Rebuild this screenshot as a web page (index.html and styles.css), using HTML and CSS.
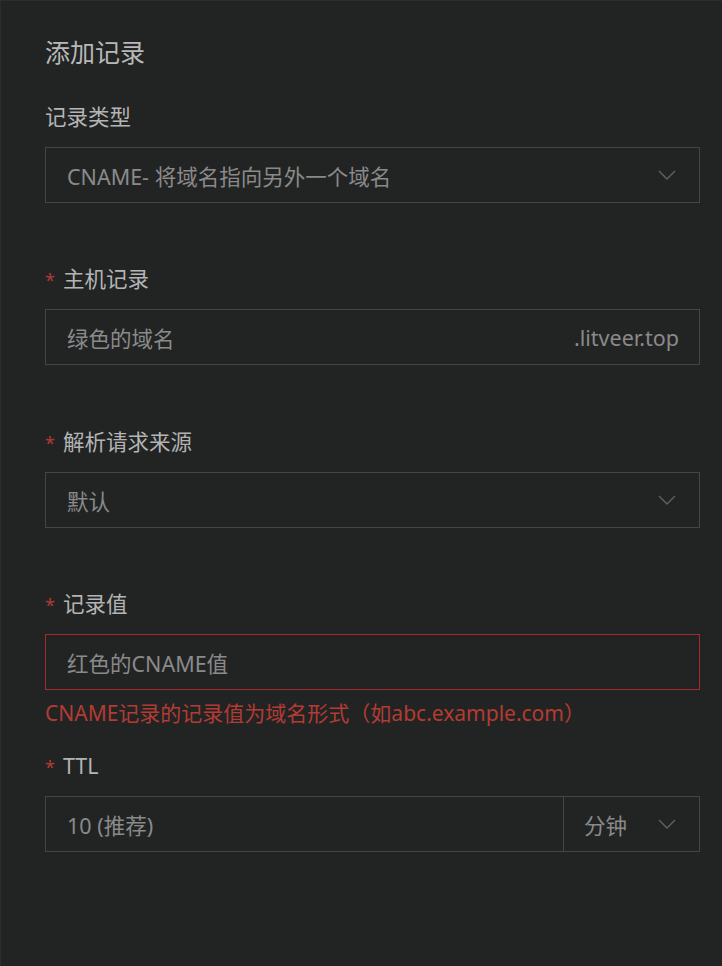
FILE: index.html
```html
<!DOCTYPE html>
<html lang="zh-CN">
<head>
<meta charset="utf-8">
<link rel="stylesheet" href="styles.css">
</head>
<body>
<div class="panel">
  <h1 class="title">添加记录</h1>

  <div class="field">
    <div class="label">记录类型</div>
    <div class="box select">
      <span class="value">CNAME- 将域名指向另外一个域名</span>
      <svg class="chev" width="18" height="10" viewBox="0 0 18 10"><path d="M1 1 L9 9 L17 1" fill="none" stroke="#5f6161" stroke-width="1.4"/></svg>
    </div>
  </div>

  <div class="field field-gap">
    <div class="label"><span class="req">*</span>主机记录</div>
    <div class="box">
      <span class="value">绿色的域名</span>
      <span class="suffix">.litveer.top</span>
    </div>
  </div>

  <div class="field">
    <div class="label"><span class="req">*</span>解析请求来源</div>
    <div class="box select">
      <span class="value">默认</span>
      <svg class="chev" width="18" height="10" viewBox="0 0 18 10"><path d="M1 1 L9 9 L17 1" fill="none" stroke="#5f6161" stroke-width="1.4"/></svg>
    </div>
  </div>

  <div class="field field-error">
    <div class="label"><span class="req">*</span>记录值</div>
    <div class="box error-box">
      <span class="value">红色的CNAME值</span>
    </div>
    <div class="error">CNAME记录的记录值为域名形式（如abc.example.com）</div>
  </div>

  <div class="field">
    <div class="label"><span class="req">*</span>TTL</div>
    <div class="ttl">
      <div class="box ttl-main"><span class="value">10 (推荐)</span></div>
      <div class="box ttl-unit select">
        <span class="value">分钟</span>
        <svg class="chev" width="18" height="10" viewBox="0 0 18 10"><path d="M1 1 L9 9 L17 1" fill="none" stroke="#5f6161" stroke-width="1.4"/></svg>
      </div>
    </div>
  </div>
</div>
</body>
</html>
```

FILE: styles.css
```css
html, body {
  margin: 0;
  padding: 0;
  background: #222424;
  height: 100%;
}
body {
  font-family: "Noto Sans", "Noto Sans CJK SC", sans-serif;
  color: #b4b4b4;
}
.panel {
  box-sizing: border-box;
  min-height: 966px;
  border-top: 1px solid #2c2e2e;
  border-left: 1px solid #2c2e2e;
  padding: 36px 22px 0 44px;
}
.title {
  margin: 0 0 35px 0;
  font-size: 25px;
  font-weight: 400;
  line-height: 30px;
  color: #b8b8b8;
}
.field {
  margin-bottom: 61px;
}
.field-gap {
  margin-bottom: 62px;
}
.label {
  font-size: 21.5px;
  line-height: 30px;
  color: #b4b4b4;
  margin-bottom: 15px;
  display: flex;
  align-items: center;
}
.req {
  color: #b03a32;
  font-size: 18px;
  margin-right: 8px;
  position: relative;
  top: 1px;
}
.box {
  box-sizing: border-box;
  height: 56px;
  border: 1px solid #444646;
  display: flex;
  align-items: center;
  padding: 0 20px 0 21px;
  font-size: 21.5px;
  color: #8a8a8a;
}
.value {
  flex: 1;
  white-space: nowrap;
}
.suffix {
  color: #8a8a8a;
}
.chev {
  margin-right: 3px;
  flex: none;
}
.box.error-box {
  border: 1px solid #a52b2b;
}
.error {
  margin-top: 8px;
  font-size: 21px;
  line-height: 30px;
  color: #b33b33;
  white-space: nowrap;
}
.field-error {
  margin-bottom: 23px;
}
.ttl {
  display: flex;
}
.ttl-main {
  flex: 1;
}
.ttl-unit {
  width: 136px;
  flex: none;
  border-left: none;
  padding-left: 20px;
}
```
